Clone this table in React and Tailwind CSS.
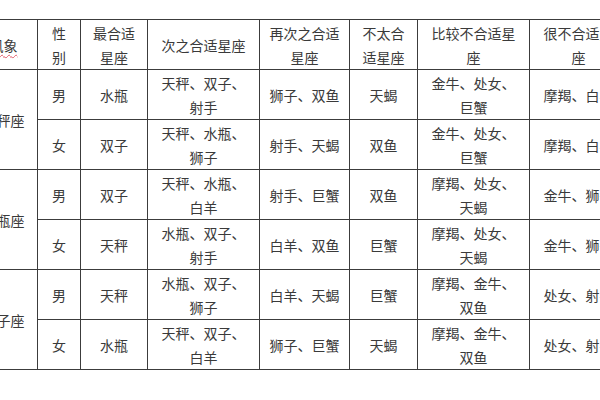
import React from 'react';

const widths = [68, 43, 67, 112, 90, 68, 112, 98];

const header = ['性别', '最合适星座', '次之合适星座', '再次之合适星座', '不太合适星座', '比较不合适星座', '很不合适星座'];

const groups = [
  {
    sign: '天秤座',
    rows: [
      ['男', '水瓶', '天秤、双子、射手', '狮子、双鱼', '天蝎', '金牛、处女、巨蟹', '摩羯、白羊'],
      ['女', '双子', '天秤、水瓶、狮子', '射手、天蝎', '双鱼', '金牛、处女、巨蟹', '摩羯、白羊'],
    ],
  },
  {
    sign: '水瓶座',
    rows: [
      ['男', '双子', '天秤、水瓶、白羊', '射手、巨蟹', '双鱼', '摩羯、处女、天蝎', '金牛、狮子'],
      ['女', '天秤', '水瓶、双子、射手', '白羊、双鱼', '巨蟹', '摩羯、处女、天蝎', '金牛、狮子'],
    ],
  },
  {
    sign: '双子座',
    rows: [
      ['男', '天秤', '水瓶、双子、狮子', '白羊、天蝎', '巨蟹', '摩羯、金牛、双鱼', '处女、射手'],
      ['女', '水瓶', '天秤、双子、白羊', '狮子、巨蟹', '天蝎', '摩羯、金牛、双鱼', '处女、射手'],
    ],
  },
];

const cell = 'border-[1.5px] border-[#3c3c3c] px-[8px] py-0 text-center align-middle leading-[24px] font-normal';

const App = () => {
  return (
    <div className="w-[600px] h-[400px] overflow-hidden bg-white pt-[19px] font-[family-name:'Noto_Sans_CJK_SC',sans-serif]">
      <table
        className="ml-[-31px] table-fixed border-collapse text-[14px] text-[#3a3a3a]"
        style={{ width: widths.reduce((a, b) => a + b, 0) }}
        lang="zh-CN"
      >
        <colgroup>
          {widths.map((w, i) => <col key={i} style={{ width: w }} />)}
        </colgroup>
        <thead>
          <tr className="h-[50px]">
            <th className={cell}>
              <span className="underline decoration-wavy decoration-[#e05a6a] decoration-1 underline-offset-[3px]">风象</span>
            </th>
            {header.map((h, i) => <th key={i} className={cell}>{h}</th>)}
          </tr>
        </thead>
        <tbody>
          {groups.map(g => g.rows.map((r, ri) => (
            <tr key={g.sign + ri} className="h-[50px]">
              {ri === 0 && <td rowSpan={2} className={cell}>{g.sign}</td>}
              {r.map((c, ci) => <td key={ci} className={cell}>{c}</td>)}
            </tr>
          )))}
        </tbody>
      </table>
    </div>
  );
};

export default App;
